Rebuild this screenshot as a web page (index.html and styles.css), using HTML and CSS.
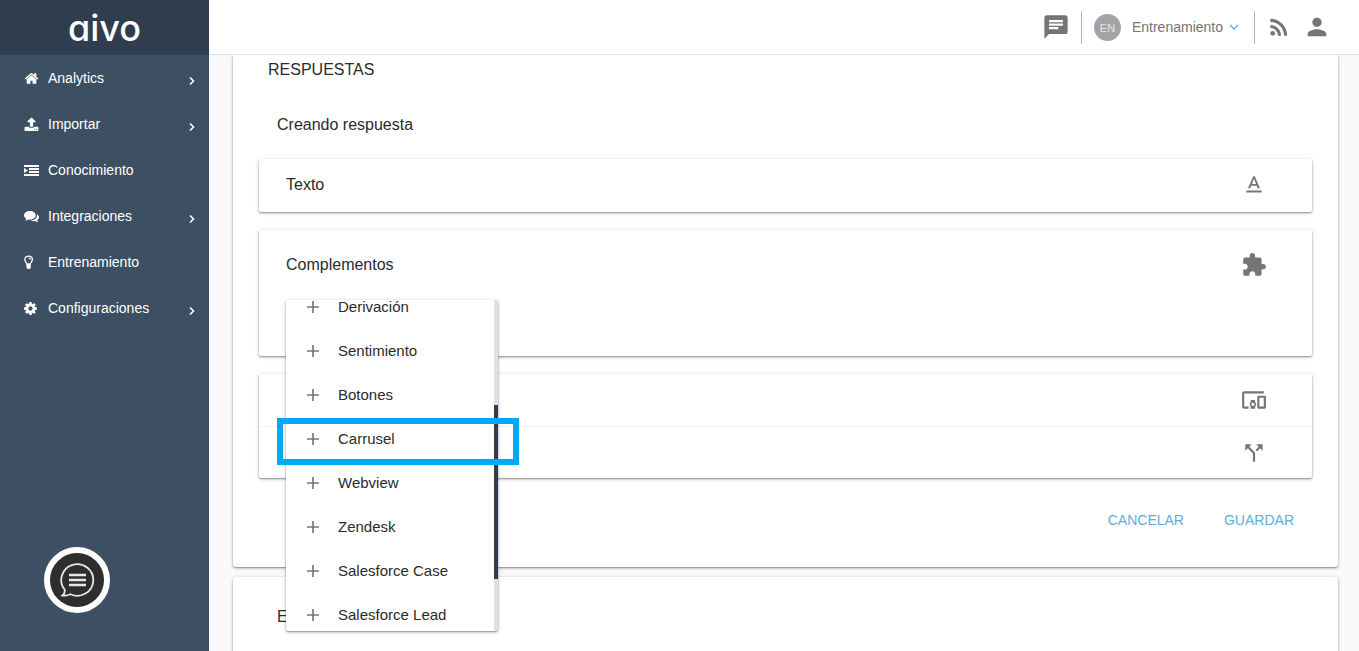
FILE: index.html
```html
<!DOCTYPE html>
<html lang="es">
<head>
<meta charset="utf-8">
<meta name="viewport" content="width=device-width, initial-scale=1">
<title>aivo - Entrenamiento</title>
<link rel="stylesheet" href="styles.css">
</head>
<body>
<aside class="sidebar">
  <div class="brand">aivo</div>
  <nav class="nav">
    <a class="nav-item" href="#">
      <svg class="nav-icon" viewBox="0 0 1792 1792"><path d="M1472 992v480q0 26-19 45t-45 19h-384v-384h-256v384h-384q-26 0-45-19t-19-45v-480q0-1 .5-3t.5-3l575-474 575 474q1 2 1 6zm223-69l-62 74q-8 9-21 11h-3q-13 0-21-7l-692-577-692 577q-12 8-24 7-13-2-21-11l-62-74q-8-10-7-23.5t11-21.5l719-599q32-26 76-26t76 26l244 204v-195q0-14 9-23t23-9h192q14 0 23 9t9 23v408l219 182q10 8 11 21.5t-7 23.5z"/></svg>
      <span class="nav-label">Analytics</span>
      <svg class="nav-arrow" viewBox="0 0 8 10"><path d="M2 1.500l3.500 3.500-3.500 3.500"/></svg>
    </a>
    <a class="nav-item" href="#">
      <svg class="nav-icon" viewBox="0 0 1792 1792"><path d="M1344 1472q0-26-19-45t-45-19-45 19-19 45 19 45 45 19 45-19 19-45zm256 0q0-26-19-45t-45-19-45 19-19 45 19 45 45 19 45-19 19-45zm128-224v320q0 40-28 68t-68 28h-1472q-40 0-68-28t-28-68v-320q0-40 28-68t68-28h427q21 56 70.5 92t110.5 36h256q61 0 110.5-36t70.5-92h427q40 0 68 28t28 68zm-325-648q-17 40-59 40h-256v448q0 26-19 45t-45 19h-256q-26 0-45-19t-19-45v-448h-256q-42 0-59-40-17-39 14-69l448-448q18-19 45-19t45 19l448 448q31 30 14 69z"/></svg>
      <span class="nav-label">Importar</span>
      <svg class="nav-arrow" viewBox="0 0 8 10"><path d="M2 1.500l3.500 3.500-3.500 3.500"/></svg>
    </a>
    <a class="nav-item" href="#">
      <svg class="nav-icon" viewBox="0 0 15 15"><path d="M0 2h15v2H0zM5 5h10v2H5zM5 8h10v2H5zM0 11h15v2H0zM0 5l4 2.500-4 2.500z"/></svg>
      <span class="nav-label">Conocimiento</span>
    </a>
    <a class="nav-item" href="#">
      <svg class="nav-icon" viewBox="0 0 16 16"><path d="M6.300 2C9.800 2 12.500 4.100 12.500 6.700S9.800 11.400 6.300 11.400c-.6 0-1.200-.1-1.700-.2-1 .8-2 1.200-3.300 1.300.6-.6 1-1.300 1.100-2.100C.9 9.500 0 8.200 0 6.700 0 4.100 2.800 2 6.300 2z"/><path d="M13.500 5.200c1.500.8 2.500 2.100 2.500 3.600 0 1.300-.8 2.500-2 3.300.1.800.6 1.400 1.200 2-1.400-.1-2.500-.6-3.400-1.300-1.600.4-3.400.2-4.800-.5 3.900-.2 6.900-2.500 6.900-5.600 0-.5-.1-1-.4-1.500z"/></svg>
      <span class="nav-label">Integraciones</span>
      <svg class="nav-arrow" viewBox="0 0 8 10"><path d="M2 1.500l3.500 3.500-3.500 3.500"/></svg>
    </a>
    <a class="nav-item" href="#">
      <svg class="nav-icon" viewBox="0 0 16 16"><path class="bulb-line" d="M3.400 10C3.200 8.300.9 7.500.9 4.900.9 2.600 2.700 1.200 4.900 1.200s4 1.400 4 3.700C8.900 7.500 6.600 8.300 6.400 10zM5 3.300c1 0 1.700.6 1.800 1.500"/><path d="M2.600 9h4.600v4.500L6 15H4l-1.400-1.500z"/></svg>
      <span class="nav-label">Entrenamiento</span>
    </a>
    <a class="nav-item" href="#">
      <svg class="nav-icon" viewBox="128 0 1792 1792"><path d="M1152 896q0-106-75-181t-181-75-181 75-75 181 75 181 181 75 181-75 75-181zm512-109v222q0 12-8 23t-20 13l-185 28q-19 54-39 91 35 50 107 138 10 12 10 25t-9 23q-27 37-99 108t-94 71q-12 0-26-9l-138-108q-44 23-91 38-16 136-29 186-7 28-36 28h-222q-14 0-24.5-8.5t-11.500-21.500l-28-184q-49-16-90-37l-141 107q-10 9-25 9-14 0-25-11-126-114-165-168-7-10-7-23 0-12 8-23 15-21 51-66.500t54-70.500q-27-50-41-99l-183-27q-13-2-21-12.500t-8-23.500v-222q0-12 8-23t19-13l186-28q14-46 39-92-40-57-107-138-10-12-10-24 0-10 9-23 26-36 98.500-107.500t94.500-71.500q13 0 26 10l138 107q44-23 91-38 16-136 29-186 7-28 36-28h222q14 0 24.500 8.500t11.500 21.500l28 184q49 16 90 37l142-107q9-9 24-9 13 0 25 10 129 119 165 170 7 8 7 22 0 12-8 23-15 21-51 66.500t-54 70.500q26 50 41 98l183 28q13 2 21 12.500t8 23.500z"/></svg>
      <span class="nav-label">Configuraciones</span>
      <svg class="nav-arrow" viewBox="0 0 8 10"><path d="M2 1.500l3.500 3.500-3.500 3.500"/></svg>
    </a>
  </nav>
  <button class="chat-launcher" type="button" aria-label="Chat">
    <svg viewBox="0 0 36 36"><path class="bubble" d="M3.500 33.500c1.600-1.300 2.400-3.300 2.400-5.500A16 15.800 0 1 1 11.500 32.300c-2.300 1.200-5 1.700-8 1.200z"/><path class="lines" d="M10 13h17M10 18h17M10 23h17"/></svg>
  </button>
</aside>

<div class="page">
  <header class="topbar">
    <button class="icon-btn" type="button" aria-label="Mensajes"><svg class="icon-lg" viewBox="0 0 24 24"><path d="M20 2H4c-1.100 0-1.990.9-1.990 2L2 22l4-4h14c1.100 0 2-.9 2-2V4c0-1.100-.9-2-2-2zM6 9h12v2H6V9zm8 5H6v-2h8v2zm4-6H6V6h12v2z"/></svg></button>
    <div class="account">
      <span class="avatar">EN</span>
      <button class="account-btn" type="button">Entrenamiento <svg class="caret" viewBox="0 0 10 6"><path d="M1 1l4 4 4-4"/></svg></button>
    </div>
    <button class="icon-btn" type="button" aria-label="Novedades"><svg class="icon" viewBox="0 0 24 24"><circle cx="6.180" cy="17.820" r="2.180"/><path d="M4 4.440v2.830c7.030 0 12.730 5.700 12.730 12.730h2.830c0-8.590-6.970-15.560-15.560-15.560zm0 5.660v2.830c3.900 0 7.070 3.170 7.070 7.070h2.830c0-5.470-4.430-9.900-9.900-9.900z"/></svg></button>
    <button class="icon-btn" type="button" aria-label="Perfil"><svg class="icon-lg" viewBox="0 0 24 24"><path d="M12 12c2.210 0 4-1.790 4-4s-1.790-4-4-4-4 1.790-4 4 1.790 4 4 4zm0 2c-2.670 0-8 1.340-8 4v2h16v-2c0-2.660-5.330-4-8-4z"/></svg></button>
  </header>

  <main class="content">
    <section class="card answers">
      <h1 class="title">RESPUESTAS</h1>
      <h2 class="subtitle">Creando respuesta</h2>

      <div class="panel row text-row">
        <span>Texto</span>
        <svg class="icon" viewBox="0 0 24 24"><path d="M5 17v2h14v-2H5zm4.500-4.200h5l.9 2.200h2.100L12.750 4h-1.500L6.500 15h2.100l.9-2.200zM12 5.980L13.870 11h-3.740L12 5.980z"/></svg>
      </div>

      <div class="panel addons">
        <div class="row addons-head">
          <span>Complementos</span>
          <svg class="icon" viewBox="0 0 24 24"><path d="M20.500 11H19V7c0-1.100-.9-2-2-2h-4V3.500C13 2.120 11.880 1 10.500 1S8 2.120 8 3.500V5H4c-1.100 0-1.990.9-1.990 2v3.800H3.500c1.490 0 2.700 1.210 2.700 2.700s-1.210 2.700-2.700 2.700H2V20c0 1.100.9 2 2 2h3.800v-1.500c0-1.490 1.210-2.700 2.700-2.700 1.490 0 2.700 1.210 2.700 2.700V22H17c1.100 0 2-.9 2-2v-4h1.500c1.380 0 2.500-1.120 2.500-2.500S21.880 11 20.500 11z"/></svg>
        </div>
        <div class="dropdown">
          <div class="menu">
            <div class="menu-list">
              <button class="menu-item" type="button"><svg class="plus" viewBox="0 0 13 13"><path d="M6.500 0v13M0 6.500h13"/></svg>Derivación</button>
              <button class="menu-item" type="button"><svg class="plus" viewBox="0 0 13 13"><path d="M6.500 0v13M0 6.500h13"/></svg>Sentimiento</button>
              <button class="menu-item" type="button"><svg class="plus" viewBox="0 0 13 13"><path d="M6.500 0v13M0 6.500h13"/></svg>Botones</button>
              <button class="menu-item" type="button"><svg class="plus" viewBox="0 0 13 13"><path d="M6.500 0v13M0 6.500h13"/></svg>Carrusel</button>
              <button class="menu-item" type="button"><svg class="plus" viewBox="0 0 13 13"><path d="M6.500 0v13M0 6.500h13"/></svg>Webview</button>
              <button class="menu-item" type="button"><svg class="plus" viewBox="0 0 13 13"><path d="M6.500 0v13M0 6.500h13"/></svg>Zendesk</button>
              <button class="menu-item" type="button"><svg class="plus" viewBox="0 0 13 13"><path d="M6.500 0v13M0 6.500h13"/></svg>Salesforce Case</button>
              <button class="menu-item" type="button"><svg class="plus" viewBox="0 0 13 13"><path d="M6.500 0v13M0 6.500h13"/></svg>Salesforce Lead</button>
            </div>
            <div class="scroll-track"><div class="scroll-thumb"></div></div>
          </div>
          <div class="highlight"></div>
        </div>
      </div>

      <div class="panel options">
        <div class="row option">
          <svg class="icon" viewBox="0 0 24 24"><path d="M3 6h18V4H3c-1.100 0-2 .9-2 2v12c0 1.100.9 2 2 2h4v-2H3V6zm10 6H9v1.780c-.61.55-1 1.330-1 2.220s.39 1.670 1 2.220V20h4v-1.780c.61-.55 1-1.340 1-2.220s-.39-1.670-1-2.220V12zm-2 5.500c-.83 0-1.500-.67-1.500-1.500s.67-1.500 1.500-1.500 1.500.67 1.500 1.500-.67 1.500-1.500 1.500zM22 8h-6c-.5 0-1 .5-1 1v10c0 .5.5 1 1 1h6c.5 0 1-.5 1-1V9c0-.5-.5-1-1-1zm-1 10h-4v-8h4v8z"/></svg>
        </div>
        <div class="row option">
          <svg class="icon" viewBox="0 0 24 24"><path d="M14 4l2.290 2.290-2.880 2.880 1.420 1.420 2.880-2.880L20 10V4zm-4 0H4v6l2.290-2.290 4.710 4.700V20h2v-8.410l-5.290-5.300z"/></svg>
        </div>
      </div>

      <div class="actions">
        <button class="action" type="button">CANCELAR</button>
        <button class="action" type="button">GUARDAR</button>
      </div>
    </section>

    <section class="card next">
      <h2 class="next-title">E</h2>
    </section>
  </main>
</div>
</body>
</html>
```

FILE: styles.css
```css
* { box-sizing: border-box; }

body {
  margin: 0;
  height: 100vh;
  display: flex;
  overflow: hidden;
  background: #fafafa;
  color: #2b2b2b;
  font: 16px/20px "Liberation Sans", Arial, sans-serif;
}

button {
  padding: 0;
  border: 0;
  background: none;
  font: inherit;
  color: inherit;
  cursor: pointer;
}

svg { display: block; flex: none; }

/* Sidebar */
.sidebar {
  flex: none;
  width: 209px;
  display: flex;
  flex-direction: column;
  background: #3d4f62;
  color: #fff;
}

.brand {
  height: 55px;
  display: flex;
  align-items: center;
  justify-content: center;
  background: #2f3d4f;
  font: 500 36px/54px Inter, sans-serif;
  font-feature-settings: "cv11";
}

.nav-item {
  height: 46px;
  padding: 0 13px 0 24px;
  display: flex;
  align-items: center;
  color: #fff;
  font-size: 14px;
  text-decoration: none;
}

.nav-icon { width: 15px; height: 15px; fill: #fff; }
.bulb-line { fill: none; stroke: #fff; stroke-width: 1.4; }
.nav-label { flex: 1; padding-left: 9px; }

.nav-arrow {
  width: 8px;
  height: 10px;
  margin-top: 6px;
  fill: none;
  stroke: #fff;
  stroke-width: 1.6;
}

.chat-launcher {
  width: 66px;
  height: 66px;
  margin: auto 0 38px 44px;
  display: grid;
  place-items: center;
  border: 6px solid #fff;
  border-radius: 50%;
  background: #2e2e2e;
}

.chat-launcher svg { width: 36px; height: 36px; fill: none; stroke: #e8e8e8; }
.bubble { stroke-width: 1.8; }
.lines { stroke-width: 2.4; }

/* Top bar */
.page {
  flex: 1;
  min-width: 0;
  display: flex;
  flex-direction: column;
}

.topbar {
  flex: none;
  height: 55px;
  padding-right: 28px;
  display: flex;
  align-items: center;
  justify-content: flex-end;
  gap: 11px;
  border-bottom: 1px solid #dfe3ec;
  background: #fff;
  color: #757575;
}

.icon { width: 26px; height: 26px; fill: #757575; }
.icon-lg { width: 28px; height: 28px; fill: #757575; }

.account {
  height: 33px;
  padding: 0 15px 0 12px;
  display: flex;
  align-items: center;
  gap: 11px;
  border: solid #b5b5b5;
  border-width: 0 1px;
}

.avatar {
  width: 27px;
  height: 27px;
  border-radius: 50%;
  background: #a3a3a3;
  color: #e6e6e6;
  font-size: 11px;
  line-height: 28px;
  text-align: center;
}

.account-btn {
  display: flex;
  align-items: center;
  gap: 6px;
  font-size: 14px;
}

.caret { width: 10px; height: 6px; fill: none; stroke: #5aaee0; stroke-width: 1.3; }

/* Content */
.content {
  flex: 1;
  min-height: 0;
  padding: 0 21px 0 24px;
  display: flex;
  flex-direction: column;
  gap: 10px;
  overflow: hidden;
}

.card,
.panel {
  background: #fff;
  box-shadow: 0 1px 2px rgba(0, 0, 0, .4), 0 1px 5px rgba(0, 0, 0, .14);
}

.card { flex: none; border-radius: 0 0 3px 3px; }
.panel { border-radius: 2px; }

.answers { padding: 5px 26px 37px; }

.title,
.subtitle,
.next-title {
  margin: 0;
  font-size: 16px;
  font-weight: 400;
}

.title { padding-left: 9px; }
.subtitle { padding: 35px 0 0 18px; }

.row {
  min-height: 53px;
  padding: 0 45px 0 27px;
  display: flex;
  align-items: center;
  justify-content: space-between;
}

.text-row { margin-top: 24px; padding-bottom: 2px; }

.addons {
  position: relative;
  margin-top: 18px;
  padding: 8px 0 65px;
}

.options { margin-top: 18px; }
.option { min-height: 52px; justify-content: flex-end; }
.option + .option { border-top: 1px solid #efefef; }

.actions {
  margin-top: 32px;
  padding-right: 18px;
  display: flex;
  justify-content: flex-end;
  gap: 40px;
  color: #5aaee0;
  font-size: 14px;
  line-height: 20px;
}

.next { min-height: 200px; padding: 30px 44px; border-radius: 3px; }

/* Add-on menu, laid over the panels below */
.dropdown {
  position: absolute;
  z-index: 1;
  top: 70px;
  left: 27px;
  width: 212px;
}

.menu {
  height: 331px;
  display: flex;
  overflow: hidden;
  border-radius: 2px;
  background: #fff;
  box-shadow: 0 1px 2px rgba(0, 0, 0, .4), 0 1px 5px rgba(0, 0, 0, .14);
}

.menu-list { flex: 1; margin-top: -15px; }

.menu-item {
  width: 100%;
  height: 44px;
  padding-left: 21px;
  display: flex;
  align-items: center;
  gap: 19px;
  font-size: 15px;
  line-height: 14px;
}

.plus { width: 12px; height: 12px; fill: none; stroke: #757575; stroke-width: 1.8; }

.scroll-track { width: 4px; padding-top: 105px; background: #e0e0e0; }
.scroll-thumb { height: 174px; background: #2f3d4f; }

.highlight {
  position: absolute;
  top: 118px;
  left: -9px;
  width: 242px;
  height: 47px;
  border: 6px solid #03a9f4;
}
```
